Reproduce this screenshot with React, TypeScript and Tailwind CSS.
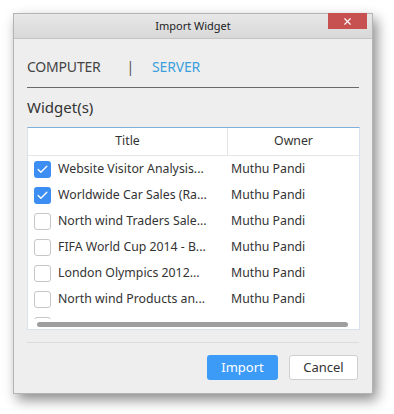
import { Check, X } from "lucide-react";

const rows = [
  { title: "Website Visitor Analysis...", owner: "Muthu Pandi", checked: true },
  { title: "Worldwide Car Sales (Ra...", owner: "Muthu Pandi", checked: true },
  { title: "North wind Traders Sale...", owner: "Muthu Pandi", checked: false },
  { title: "FIFA World Cup 2014 - B...", owner: "Muthu Pandi", checked: false },
  { title: "London Olympics 2012...", owner: "Muthu Pandi", checked: false },
  { title: "North wind Products an...", owner: "Muthu Pandi", checked: false },
  { title: "North wind Orders Over...", owner: "Muthu Pandi", checked: false },
];

function Checkbox({ checked }: { checked: boolean }) {
  return checked ? (
    <span className="w-[17px] h-[17px] rounded-[3px] bg-[#3d8ef2] flex items-center justify-center shrink-0">
      <Check size={13} strokeWidth={2.5} className="text-white" />
    </span>
  ) : (
    <span className="w-[17px] h-[17px] rounded-[3px] bg-white border border-[#c6c6c6] shrink-0" />
  );
}

export default function App() {
  return (
    <div
      className="w-[394px] h-[414px] bg-white pt-[13px] pl-[13px] text-[#333]"
      style={{ fontFamily: '"Noto Sans", "Open Sans", sans-serif' }}
    >
      <div className="w-[360px] h-[381px] bg-[#eeeeee] border border-[#b4b4b4] shadow-[4px_6px_12px_rgba(0,0,0,0.45)] flex flex-col">
        {/* Title bar */}
        <div className="relative h-[25px] shrink-0 flex items-center justify-center bg-gradient-to-b from-[#e8e8e8] to-[#d8d8d8] border-b border-[#c4c4c4]">
          <span className="text-[11px] text-[#222]">Import Widget</span>
          <button className="absolute right-[5px] top-[-1px] w-[39px] h-[16px] bg-[#c75050] flex items-center justify-center">
            <X size={11} strokeWidth={2.5} className="text-white" />
          </button>
        </div>

        {/* Body */}
        <div className="px-[13px] flex flex-col flex-1">
          {/* Tabs */}
          <div className="h-[49px] flex items-end pb-[10px] border-b border-[#6a6a6a] text-[14px] tracking-[-0.2px]">
            <span className="text-[#444]">COMPUTER</span>
            <span className="ml-[26px] text-[#555]">|</span>
            <span className="ml-[18px] text-[#3aa0de]">SERVER</span>
          </div>

          <div className="mt-[8px] h-[23px] flex items-center text-[15px] text-[#333]">Widget(s)</div>

          {/* Grid */}
          <div className="mt-[8px] w-[333px] h-[203px] bg-white border border-[#d6e2ee] border-t-[#7fb0dc] flex flex-col overflow-hidden">
            <div className="h-[28px] shrink-0 flex border-b border-[#e6e6e6] text-[12.3px]">
              <div className="w-[200px] flex items-center justify-center border-r border-[#e6e6e6]">Title</div>
              <div className="flex-1 flex items-center justify-center">Owner</div>
            </div>
            <div className="relative flex-1 overflow-hidden">
              {rows.map((r) => (
                <div key={r.title} className="h-[26px] flex items-center text-[12.3px]">
                  <div className="w-[200px] flex items-center pl-[6px] gap-[7px]">
                    <Checkbox checked={r.checked} />
                    <span className="whitespace-nowrap overflow-hidden">{r.title}</span>
                  </div>
                  <div className="pl-[3px] whitespace-nowrap">{r.owner}</div>
                </div>
              ))}
              <div className="absolute left-0 right-0 bottom-0 h-[10px] bg-white flex items-center px-[9px]">
                <div className="w-[311px] h-[5px] rounded-full bg-[#9e9e9e]" />
              </div>
            </div>
          </div>

          <div className="mt-[12px] border-t border-[#dcdcdc]" />

          {/* Footer */}
          <div className="mt-[12px] flex justify-end gap-[11px] pr-[1px]">
            <button className="w-[71px] h-[25px] rounded-[3px] bg-[#3d9bf8] text-white text-[13px]">Import</button>
            <button className="w-[69px] h-[25px] rounded-[3px] bg-white border border-[#cfcfcf] text-[13px] text-[#333]">Cancel</button>
          </div>
        </div>
      </div>
    </div>
  );
}
